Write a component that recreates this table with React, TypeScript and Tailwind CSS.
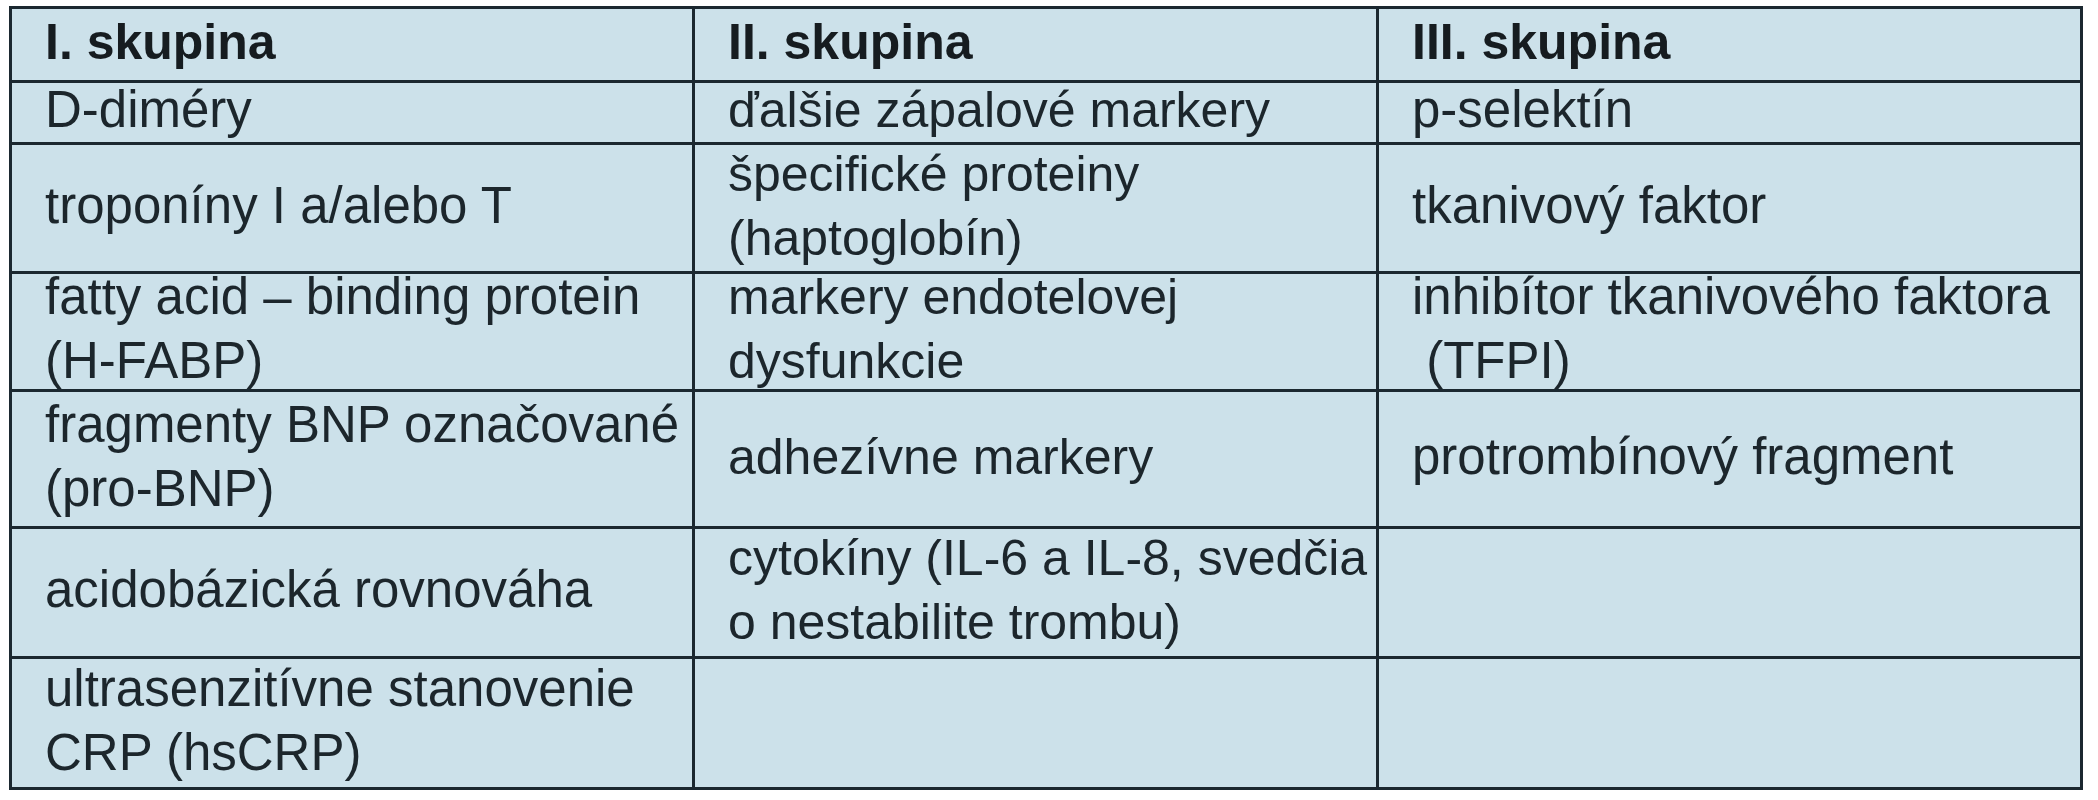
const rows: { h: string; cells: React.ReactNode[] }[] = [
  { h: "h-[62px]", cells: ["D-diméry", "ďalšie zápalové markery", "p-selektín"] },
  {
    h: "h-[129px]",
    cells: [
      "troponíny I a/alebo T",
      <>špecifické proteiny<br />(haptoglobín)</>,
      "tkanivový faktor",
    ],
  },
  {
    h: "h-[118px]",
    cells: [
      <>fatty acid – binding protein<br />(H-FABP)</>,
      <>markery endotelovej<br />dysfunkcie</>,
      <>inhibítor tkanivového faktora<br />&nbsp;(TFPI)</>,
    ],
  },
  {
    h: "h-[137px]",
    cells: [
      <>fragmenty BNP označované<br />(pro-BNP)</>,
      "adhezívne markery",
      "protrombínový fragment",
    ],
  },
  {
    h: "h-[130px]",
    cells: [
      "acidobázická rovnováha",
      <>cytokíny (IL-6 a IL-8, svedčia<br />o nestabilite trombu)</>,
      "",
    ],
  },
  {
    h: "h-[131px]",
    cells: [<>ultrasenzitívne stanovenie<br />CRP (hsCRP)</>, "", ""],
  },
];

const colW = ["w-[680px]", "w-[684px]", "w-[698px]"];
const bodySize = ["text-[51px]", "text-[50px]", "text-[51px]"];

function Cell({ i, children, bold }: { i: number; children: React.ReactNode; bold?: boolean }) {
  return (
    <div
      className={`${colW[i]} ${i > 0 ? "border-l-[3px] border-[#1b2830]" : ""} flex items-center pl-[33px] pb-[5px] whitespace-nowrap ${
        bold ? "font-bold text-[50px] text-[#161c20]" : `${bodySize[i]} text-[#1c262c]`
      }`}
    >
      <div>{children}</div>
    </div>
  );
}

export default function App() {
  return (
    <div
      className="min-h-screen bg-white pt-[6px] pl-[9px]"
      style={{ fontFamily: '"Liberation Sans", Arial, sans-serif' }}
    >
      <div className="w-[2074px] border-[3px] border-[#1b2830] bg-[#cce1ea] leading-[64px]">
        <div className="flex h-[71px]">
          {["I. skupina", "II. skupina", "III. skupina"].map((t, i) => (
            <Cell key={i} i={i} bold>
              {t}
            </Cell>
          ))}
        </div>
        {rows.map((r, ri) => (
          <div key={ri} className={`flex ${r.h} border-t-[3px] border-[#1b2830]`}>
            {r.cells.map((c, i) => (
              <Cell key={i} i={i}>
                {c}
              </Cell>
            ))}
          </div>
        ))}
      </div>
    </div>
  );
}
